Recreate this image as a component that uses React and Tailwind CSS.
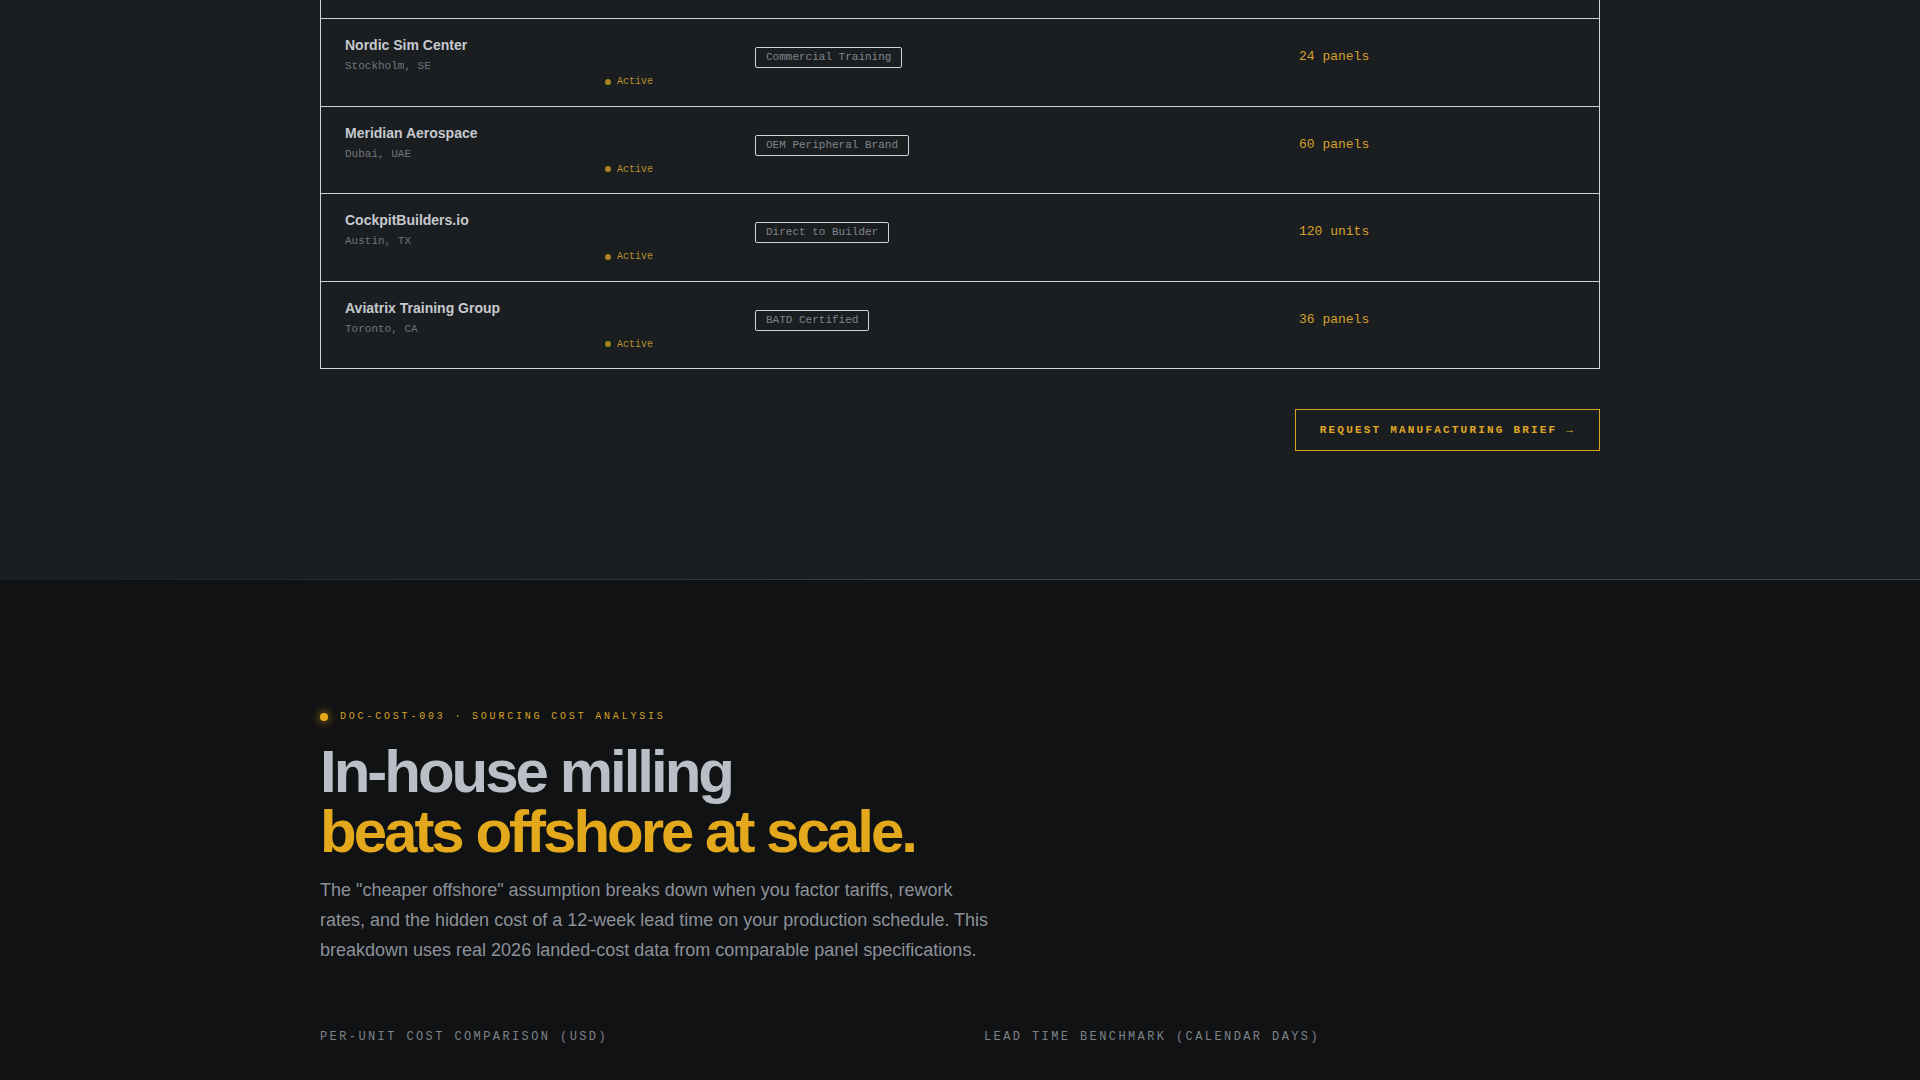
const partners = [
  { name: "Nordic Sim Center", loc: "Stockholm, SE", tag: "Commercial Training", vol: "24 panels" },
  { name: "Meridian Aerospace", loc: "Dubai, UAE", tag: "OEM Peripheral Brand", vol: "60 panels" },
  { name: "CockpitBuilders.io", loc: "Austin, TX", tag: "Direct to Builder", vol: "120 units" },
  { name: "Aviatrix Training Group", loc: "Toronto, CA", tag: "BATD Certified", vol: "36 panels" },
];

function PartnerRow({ p }) {
  return (
    <div className="flex h-[87.6px] items-start border-t border-[#cfd3d8] px-6 pt-4">
      <div className="w-[410px] shrink-0">
        <div className="w-[308px]">
          <div className="text-[14px] font-bold leading-5 text-[#c5c9ce]">{p.name}</div>
          <div className="mt-[3px] font-['Liberation_Mono',monospace] text-[11px] leading-4 text-[#6f747a]">
            {p.loc}
          </div>
          <div className="flex items-center justify-end gap-[6px] font-['Liberation_Mono',monospace] text-[10px] leading-[15px] text-[#b8912a]">
            <span className="h-[6px] w-[6px] rounded-full bg-[#a8841f]" />
            Active
          </div>
        </div>
      </div>
      <div className="w-[544px] shrink-0 pt-[8px]">
        <span className="inline-block rounded-[2px] border border-[#cfd3d8] px-[10px] py-[2px] font-['Liberation_Mono',monospace] text-[11px] leading-[15px] text-[#80858b]">
          {p.tag}
        </span>
      </div>
      <div className="pt-[12px] font-['Liberation_Mono',monospace] text-[13px] leading-5 text-[#d6a12b]">
        {p.vol}
      </div>
    </div>
  );
}

function Partners() {
  return (
    <section className="bg-[#1b1e21] pb-32">
      <div className="mx-auto max-w-[1280px]">
        <div className="border-x border-b border-[#cfd3d8]">
          <div className="h-[18px]" />
          {partners.map((p) => (
            <PartnerRow key={p.name} p={p} />
          ))}
        </div>
        <div className="mt-10 flex justify-end">
          <button className="border border-[#d9a323] px-6 py-3 font-['Liberation_Mono',monospace] text-[11px] font-bold uppercase leading-4 tracking-[0.2em] text-[#e0a825]">
            Request Manufacturing Brief →
          </button>
        </div>
      </div>
    </section>
  );
}

function CostAnalysis() {
  return (
    <section className="bg-[#111214] pt-[129px] pb-16">
      <div className="mx-auto max-w-[1280px]">
        <div className="flex items-center gap-[12px] font-['Liberation_Mono',monospace] text-[10px] uppercase leading-[15px] tracking-[0.28em] text-[#d9a323]">
          <span className="h-[8px] w-[8px] rounded-full bg-[#e6a91c] shadow-[0_0_8px_2px_rgba(230,169,28,0.45)]" />
          DOC-COST-003 · Sourcing Cost Analysis
        </div>
        <h2 className="mt-[18px] text-[60px] font-bold leading-[60px] tracking-[-0.05em]">
          <span className="block text-[#b9bfc6]">In-house milling</span>
          <span className="block text-[#e3a81b]">beats offshore at scale.</span>
        </h2>
        <p className="mt-[13px] max-w-[672px] text-[18px] leading-[30px] text-[#8c9198]">
          The "cheaper offshore" assumption breaks down when you factor tariffs, rework rates, and the
          hidden cost of a 12-week lead time on your production schedule. This breakdown uses real 2026
          landed-cost data from comparable panel specifications.
        </p>
        <div className="mt-16 grid grid-cols-2 gap-12 font-['Liberation_Mono',monospace] text-[12px] uppercase leading-4 tracking-[0.2em] text-[#7d8288]">
          <div>Per-Unit Cost Comparison (USD)</div>
          <div>Lead Time Benchmark (Calendar Days)</div>
        </div>
      </div>
    </section>
  );
}

export default function App() {
  return (
    <div className="min-h-screen bg-[#111214] font-['Liberation_Sans',Arial,sans-serif]">
      <Partners />
      <div className="h-px bg-gradient-to-r from-[#1b1e21] via-[#3e4146] to-[#3e4146]" />
      <CostAnalysis />
    </div>
  );
}
